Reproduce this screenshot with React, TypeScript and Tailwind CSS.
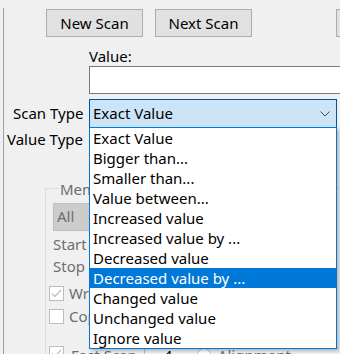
const scanTypes = [
  "Exact Value",
  "Bigger than...",
  "Smaller than...",
  "Value between...",
  "Increased value",
  "Increased value by ...",
  "Decreased value",
  "Decreased value by ...",
  "Changed value",
  "Unchanged value",
  "Ignore value",
];

const selected = 7;

function Checkbox({ checked }: { checked?: boolean }) {
  return (
    <div className="w-[15px] h-[15px] shrink-0 border border-[#bcbcbc] bg-white flex items-center justify-center">
      {checked && (
        <svg width="11" height="9" viewBox="0 0 11 9">
          <path d="M1 4.5 L4 7.5 L10 1" fill="none" stroke="#bcbcbc" strokeWidth="1.2" />
        </svg>
      )}
    </div>
  );
}

function Button({ label }: { label: string }) {
  return (
    <div className="w-[97px] h-[28px] shrink-0 border border-[#adadad] bg-[#e1e1e1] flex items-center justify-center">
      {label}
    </div>
  );
}

export default function App() {
  return (
    <div className="relative w-[340px] h-[354px] overflow-hidden bg-[#f0f0f0] text-[15px] text-black font-['Noto_Sans',sans-serif]">
      <div className="pl-[3px] pt-[8px] h-full">
        <div className="h-full border-l border-[#a0a0a0] flex flex-col">
          {/* buttons */}
          <div className="flex gap-[12px] pl-[42px] mt-[1px]">
            <Button label="New Scan" />
            <Button label="Next Scan" />
            <div className="ml-[72px]">
              <Button label="Undo Scan" />
            </div>
          </div>

          <div className="pl-[85px] mt-[10px] h-[19px] leading-[19px]">Value:</div>
          <div className="pl-[85px] flex">
            <div className="w-[260px] h-[28px] shrink-0 bg-white border border-[#7a7a7a]" />
          </div>

          {/* scan type */}
          <div className="flex items-center mt-[5px]">
            <div className="w-[85px] shrink-0 pl-[9px] whitespace-nowrap">Scan Type</div>
            <div className="w-[248px] h-[29px] shrink-0 border border-[#005499] bg-[#cce4f7] flex items-center justify-between pl-[3px] pr-[6px]">
              <span>Exact Value</span>
              <svg width="10" height="6" viewBox="0 0 10 6">
                <path d="M0.5 0.5 L5 5 L9.5 0.5" fill="none" stroke="#444" strokeWidth="1" />
              </svg>
            </div>
          </div>

          {/* value type */}
          <div className="flex items-center h-[30px]">
            <div className="pl-[3px] whitespace-nowrap">Value Type</div>
          </div>

          {/* memory scan options */}
          <fieldset className="ml-[41px] mt-[28px] w-[300px] border border-[#dcdcdc] pl-[7px] text-[#6d6d6d]">
            <legend className="ml-[6px] px-[1px] leading-[20px]">Memory Scan Options</legend>
            <div className="mt-[4px] w-[60px] h-[28px] border border-[#bfbfbf] bg-[#cccccc] flex items-center pl-[3px]">
              All
            </div>
            <div className="mt-[2px] h-[22px] leading-[22px]">Start</div>
            <div className="h-[22px] leading-[22px]">Stop</div>
            <div className="flex items-center gap-[5px] mt-[5px] h-[23px] -ml-[4px]">
              <Checkbox checked />
              <span>Writable</span>
            </div>
            <div className="flex items-center gap-[5px] h-[23px] -ml-[4px]">
              <Checkbox />
              <span>CopyOnWrite</span>
            </div>
            <div className="flex items-start gap-[7px] mt-[18px] h-[23px] -ml-[4px]">
              <Checkbox checked />
              <span className="leading-[18px]">Fast Scan</span>
              <div className="w-[44px] h-[22px] border-l border-[#bcbcbc] pl-[19px] text-black leading-[18px]">4</div>
              <div className="w-[14px] h-[14px] rounded-full border border-[#bcbcbc] bg-white mt-[2px] ml-[2px]" />
              <span className="leading-[18px]">Alignment</span>
            </div>
          </fieldset>
        </div>
      </div>

      {/* open dropdown list */}
      <div className="absolute left-[89px] top-[127px] w-[248px] h-[222px] bg-white border border-[#0078d7] shadow-[2px_2px_3px_rgba(0,0,0,0.25)]">
        {scanTypes.map((t, i) => (
          <div
            key={t}
            className={
              i === selected
                ? "h-[20px] leading-[20px] pl-[3px] bg-[#0078d7] text-white whitespace-nowrap"
                : "h-[20px] leading-[20px] pl-[3px] whitespace-nowrap"
            }
          >
            {t}
          </div>
        ))}
      </div>
    </div>
  );
}
